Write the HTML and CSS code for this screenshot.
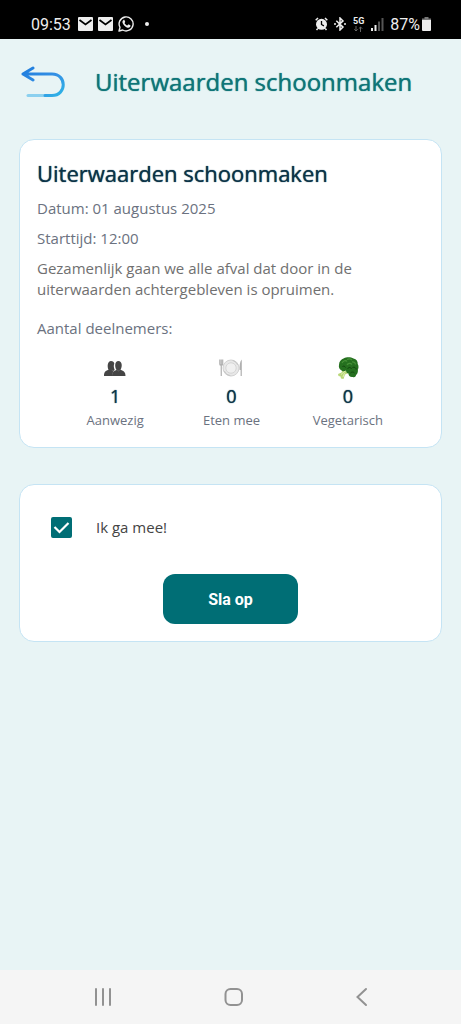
FILE: index.html
```html
<!DOCTYPE html>
<html lang="nl">
<head>
<meta charset="utf-8">
<meta name="viewport" content="width=device-width, initial-scale=1">
<title>Uiterwaarden schoonmaken</title>
<link rel="stylesheet" href="styles.css">
</head>
<body>
<div class="status-bar">
  <div class="status-group">
    <span class="clock">09:53</span>
    <svg class="status-icon" width="15" height="14" viewBox="0 0 15 14"><rect width="15" height="14" rx="1" fill="#eee"/><path d="M1.500 3 7.500 7.500 13.500 3" fill="none" stroke="#000" stroke-width="1.700"/></svg>
    <svg class="status-icon" width="15" height="14" viewBox="0 0 15 14"><rect width="15" height="14" rx="1" fill="#eee"/><path d="M1.500 3 7.500 7.500 13.500 3" fill="none" stroke="#000" stroke-width="1.700"/></svg>
    <svg class="status-icon" width="16" height="16" viewBox="0 0 16 16"><path d="M1 15 2 11.300A7 7 0 1 1 4.700 14Z" fill="none" stroke="#eee" stroke-width="1.400" stroke-linejoin="round"/><path d="M5.300 4.200c.5-.5 1-.4 1.200 0l.7 1.500c.1.400-.5.900-.7 1.200.7 1.300 1.600 2.100 2.800 2.700l.9-1c.2-.2.400-.2.700-.1l1.400.7c.4.300.1 1.400-.4 1.900-1.100 1.100-3.200.4-4.600-.7-1.500-1.200-2.900-3-2.900-4.400 0-.7.400-1.400.9-1.800Z" fill="#eee"/></svg>
    <span class="dot"></span>
  </div>
  <div class="status-group status-right">
    <svg width="13" height="14" viewBox="0 0 13 14"><circle cx="6.500" cy="7.300" r="5.500" fill="#eee"/><path d="M.7 3.200 3 1M12.300 3.200 10 1M2.800 11.500 1.500 13M10.200 11.500 11.500 13" stroke="#eee" stroke-width="1.500"/><path d="M6.500 4v3.500l2.400 1.400" fill="none" stroke="#000" stroke-width="1.300"/></svg>
    <svg width="12" height="14" viewBox="0 0 12 14"><path d="M2.300 3.700 9 10.100 6 13V1l3 2.900-6.700 6.400" fill="none" stroke="#eee" stroke-width="1.500"/><path d="M0 6.200h2v1.600H0zM10 6.200h2v1.600h-2z" fill="#eee"/></svg>
    <span class="network"><span>5G</span><svg width="9" height="6" viewBox="0 0 9 6"><path d="M2 0v5M.3 3.300 2 5 3.700 3.300M6.500 6V1M4.800 2.700 6.500 1l1.700 1.700" fill="none" stroke="#666"/></svg></span>
    <svg width="13" height="14" viewBox="0 0 13 14"><path d="M0 11h2v3H0zM3.500 8h2v6h-2z" fill="#eee"/><path d="M7 4.500h2V14H7zM10.500 1h2v13h-2z" fill="#555"/></svg>
    <span class="battery">87%<svg width="9" height="14" viewBox="0 0 9 14"><path d="M2.500 0h4v1.500H9V4H0V1.500h2.500z" fill="#777"/><path d="M0 3h9v10a1 1 0 0 1-1 1H1a1 1 0 0 1-1-1z" fill="#eee"/></svg></span>
  </div>
</div>
<header class="app-header">
  <button class="back-button" type="button" aria-label="Terug">
    <svg width="44" height="32" viewBox="0 0 44 32" fill="none" stroke-width="3" stroke-linecap="round" stroke-linejoin="round">
      <defs><linearGradient id="arrow" x1="0" y1="0" x2="1" y2="1"><stop offset="0" stop-color="#1f7cdd"/><stop offset=".55" stop-color="#3591e5"/><stop offset="1" stop-color="#2eb5e5"/></linearGradient></defs>
      <path d="M7 29.500H24" stroke="#8bd0ef"/>
      <path d="M12 2 2 8l10 6M2 8h29c15 0 15 21.500 0 21.500h-7" stroke="url(#arrow)"/>
    </svg>
  </button>
  <h1 class="page-title">Uiterwaarden schoonmaken</h1>
</header>
<main class="content">
  <section class="card details">
    <h2 class="event-title">Uiterwaarden schoonmaken</h2>
    <p class="event-line">Datum: 01 augustus 2025</p>
    <p class="event-line">Starttijd: 12:00</p>
    <p class="event-text">Gezamenlijk gaan we alle afval dat door in de uiterwaarden achtergebleven is opruimen.</p>
    <p class="event-count">Aantal deelnemers:</p>
    <ul class="stats">
      <li class="stat">
        <svg width="24" height="24" viewBox="0 0 24 24" fill="#454545"><path d="M1 20c0-3.600 1-5 4.500-6.200C4 10.500 4.500 5 8 5c2 0 3 1 3.300 2.500-.8 2-.6 4.500.4 6.300-1.200 1-2.200 2.300-2.200 6.200Z"/><path d="M9 20c0-3.600 1.500-5 4.500-6C11.500 11 11.600 5 15.400 5s4.200 5.500 2.100 8.800c3.500 1.200 5 2.500 5 6.200Z"/><path d="M9 13.800c.6 1.800 1.600 2.100 2.300 1M14.200 13.800c.5 1.500 2 1.500 2.600 0" fill="none" stroke="#777" stroke-width=".6"/></svg>
        <strong class="stat-number">1</strong>
        <span class="stat-label">Aanwezig</span>
      </li>
      <li class="stat">
        <svg width="24" height="24" viewBox="0 0 24 24"><circle cx="12" cy="12" r="8" fill="#e8e8e8" stroke="#d2d2d2"/><circle cx="12" cy="12" r="5.200" fill="#f0f0f0" stroke="#cfcfcf" stroke-width=".8"/><path d="M5.300 15a7.500 7.500 0 0 0 6 4.600M18.700 9a7.500 7.500 0 0 0-5-4.500" fill="none" stroke="#bbb" stroke-width=".7"/><path d="M.8 3.500v4.800c0 1.300 2.900 1.300 2.900 0V3.500M2.250 3.500V20" fill="none" stroke="#b0b0b0" stroke-width="1.200"/><path d="M22.800 3.500V20h-1.200v-6h-1c-.2-4.500.2-8.500 2.200-10.500Z" fill="#b0b0b0"/></svg>
        <strong class="stat-number">0</strong>
        <span class="stat-label">Eten mee</span>
      </li>
      <li class="stat">
        <svg width="24" height="24" viewBox="0 0 24 24"><path d="M7 13 12.500 17 9 18.500 7.500 23 5 22.500 4.500 20.500 2.500 20 2 18 5.500 16.500Z" fill="#b9d778"/><path d="M5 18.500 9 15M7 21 8.500 17" stroke="#e0efb2" fill="none"/><path d="M3 9C3 5.500 5 3.200 8 2.300 10.500.8 15 1 17.500 2.500c3 .6 4.500 3 4.200 5.500 1.300 2 .8 4.500.2 5.600.3 2.500-.6 4.800-1.900 5.500.2 1.500-1.800 2.900-3.200 1.900-2.600.5-4.500-1.500-4.300-3.500-1.500-.2-2.500-1.500-2.500-3-1.500 1-3.800.8-4.800-.3C3.300 13.500 2.500 11 3 9Z" fill="#25701f"/><path d="M6 7c1-2.500 4-3 5-1.500M11 3.500c2-1 4-.5 5 .5M11 9c1-2 3.500-2.300 5-.5M16 6c2-.3 3.500.8 3.500 2.500" fill="none" stroke="#479238" stroke-width="1.200"/><path d="M11.500 13c1-2 3.300-2 4 0M16.500 11.500c2-1 3.500.3 3.700 2M14.500 17c1.500-1.500 3-1 4 0M6.500 10.500c1-.7 2.500-.3 3 1" fill="none" stroke="#12460e"/></svg>
        <strong class="stat-number">0</strong>
        <span class="stat-label">Vegetarisch</span>
      </li>
    </ul>
  </section>
  <form class="card signup">
    <div class="choice">
      <input class="checkbox" type="checkbox" id="join" checked>
      <svg class="checkmark" width="21" height="21" viewBox="0 0 21 21"><path d="M3.500 10 8.500 15 17.500 6" fill="none" stroke="#fff" stroke-width="2.200"/></svg>
      <label class="choice-label" for="join">Ik ga mee!</label>
    </div>
    <button class="save-button" type="button">Sla op</button>
  </form>
</main>
<nav class="system-nav" aria-label="Systeemnavigatie">
  <button type="button" aria-label="Recente apps"><svg width="20" height="20" viewBox="0 0 20 20"><path d="M3 2v16M10 2v16M17 2v16"/></svg></button>
  <button type="button" aria-label="Startscherm"><svg width="20" height="20" viewBox="0 0 20 20"><rect x="2.500" y="2" width="16.500" height="16" rx="5"/></svg></button>
  <button type="button" aria-label="Vorige"><svg width="20" height="20" viewBox="0 0 20 20"><path d="M14 2 5.500 10l8.500 8"/></svg></button>
</nav>
</body>
</html>
```

FILE: styles.css
```css
* { box-sizing: border-box; }
body {
  margin: 0;
  min-height: 100vh;
  display: flex;
  flex-direction: column;
  background: #e8f4f5;
  color: #6b7280;
  font-family: "Open Sans", "Noto Sans", sans-serif;
  font-size: 15px;
}
h1, h2, p, ul { margin: 0; padding: 0; }
button { padding: 0; border: 0; background: none; cursor: pointer; }
svg { display: block; flex: none; }

.status-bar {
  display: flex;
  justify-content: space-between;
  height: 39px;
  padding: 9px 30px 0 31px;
  background: #000;
  color: #eee;
  font-family: Roboto, sans-serif;
  font-size: 16px;
}
.status-group { display: flex; align-items: center; gap: 5px; }
.clock { margin-right: 2px; }
.dot { width: 4px; height: 4px; margin-left: 6px; border-radius: 50%; background: #eee; }
.status-right { gap: 6px; }
.network {
  display: flex;
  flex-direction: column;
  align-items: center;
  gap: 1px;
  margin: 0 1px;
  font-size: 9px;
  font-weight: 700;
  line-height: 8px;
}
.battery { display: flex; align-items: center; gap: 2px; }

.app-header {
  display: flex;
  align-items: center;
  gap: 30px;
  height: 86px;
  padding: 0 21px;
}
.page-title,
.event-title,
.stat-number { font-weight: 500; text-shadow: 0 0 1px currentColor; }
.page-title { color: #0f7578; font-size: 24px; line-height: 34px; white-space: nowrap; }

.content {
  flex: 1;
  display: flex;
  flex-direction: column;
  gap: 36px;
  padding: 14px 19px;
}
.card {
  padding: 17px;
  border: 1px solid #c5e4f4;
  border-radius: 15px;
  background: #fff;
}
.event-title { color: #0b3448; font-size: 22px; line-height: 32px; }
.event-line,
.event-text { margin-top: 9px; line-height: 21px; }
.event-text { color: #707070; }
.event-count { margin-top: 18px; line-height: 21px; }
.stats {
  display: grid;
  grid-template-columns: repeat(3, 1fr);
  margin: 17px 18px 0 20px;
  list-style: none;
}
.stat { display: flex; flex-direction: column; align-items: center; }
.stat-number { margin-top: 3px; color: #0b3448; font-size: 18px; line-height: 26px; }
.stat-label { margin-top: 1px; font-size: 13px; line-height: 20px; }

.signup { display: flex; flex-direction: column; align-items: center; }
.choice { display: grid; grid-template-columns: 21px 1fr; column-gap: 24px; align-items: center; align-self: stretch; padding: 14px 14px 0; }
.checkbox { appearance: none; width: 21px; height: 21px; margin: 0; border: 2px solid #006e75; border-radius: 2px; grid-area: 1 / 1; }
.checkbox:checked { background: #006e75; }
.checkmark { grid-area: 1 / 1; pointer-events: none; visibility: hidden; }
.checkbox:checked + .checkmark { visibility: visible; }
.choice-label { color: #444; line-height: 22px; }
.save-button {
  min-width: 135px;
  height: 50px;
  margin-top: 36px;
  border-radius: 12px;
  background: #006e75;
  color: #fff;
  font-family: Roboto, sans-serif;
  font-size: 16px;
  font-weight: 700;
}
.system-nav {
  display: flex;
  justify-content: space-between;
  align-items: center;
  height: 54px;
  padding: 0 89px 0 93px;
  background: #f5f5f5;
}
.system-nav svg { fill: none; stroke: #929292; stroke-width: 2; stroke-linecap: round; }
```
